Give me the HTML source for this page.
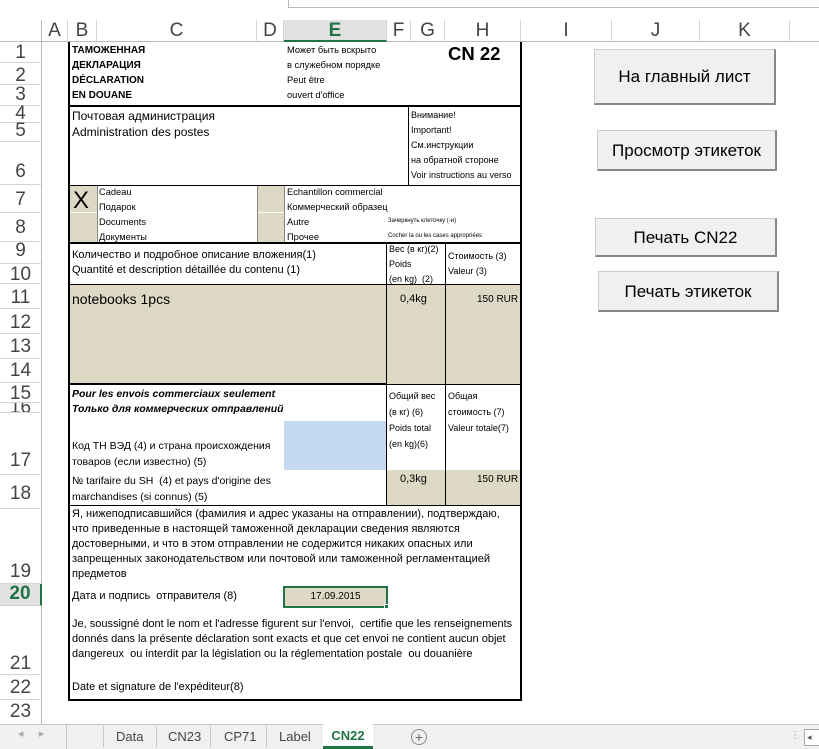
<!DOCTYPE html>
<html><head><meta charset="utf-8"><style>
body{margin:0;width:819px;height:749px;overflow:hidden;background:#fff;position:relative;font-family:"Liberation Sans",Tahoma,sans-serif;}
div{position:absolute;box-sizing:border-box;}
.ch{top:20px;height:22px;font-size:19px;color:#444;text-align:center;line-height:22px;border-right:1px solid #d4d4d4;border-bottom:1px solid #bbb;background:#fff;}
.rh{left:0;width:42px;font-size:19px;color:#444;text-align:center;border-bottom:1px solid #d4d4d4;border-right:1px solid #bbb;}
.t{font-size:10px;color:#000;white-space:nowrap;line-height:15px;}
.s{font-size:12px;color:#000;white-space:nowrap;}
.g{background:#ddd9c4;}
.btn{background:#f0f0f0;border:1px solid #ccc;border-right:2px solid #888;border-bottom:2px solid #888;font-size:17px;text-align:center;color:#000;}
</style></head><body>
<div style="left:288px;top:-1px;width:540px;height:9px;border:1px solid #bbb;"></div>
<div style="left:0;top:20px;width:42px;height:22px;border-bottom:1px solid #bbb;border-right:1px solid #bbb;"></div>
<div class="ch" style="left:42px;width:26px">A</div>
<div class="ch" style="left:68px;width:29px">B</div>
<div class="ch" style="left:97px;width:160px">C</div>
<div class="ch" style="left:257px;width:27px">D</div>
<div class="ch" style="left:284px;width:103px;background:#e1e1e1;color:#217346;font-weight:bold;border-bottom:2px solid #217346">E</div>
<div class="ch" style="left:387px;width:24px">F</div>
<div class="ch" style="left:411px;width:34px">G</div>
<div class="ch" style="left:445px;width:76px">H</div>
<div class="ch" style="left:521px;width:91px">I</div>
<div class="ch" style="left:612px;width:88px">J</div>
<div class="ch" style="left:700px;width:90px">K</div>
<div class="ch" style="left:790px;width:40px"></div>

<div class="rh" style="top:42px;height:21px;line-height:22px">1</div>
<div class="rh" style="top:63px;height:22px;line-height:26px">2</div>
<div class="rh" style="top:85px;height:21px;line-height:20px">3</div>
<div class="rh" style="top:106px;height:17px;line-height:16px">4</div>
<div class="rh" style="top:123px;height:19px;line-height:16px">5</div>
<div class="rh" style="top:142px;height:43px;line-height:60px">6</div>
<div class="rh" style="top:185px;height:28px;line-height:30px">7</div>
<div class="rh" style="top:213px;height:29px;line-height:30px">8</div>
<div class="rh" style="top:242px;height:22px;line-height:18px">9</div>
<div class="rh" style="top:264px;height:20px;line-height:22px">10</div>
<div class="rh" style="top:284px;height:25px;line-height:28px">11</div>
<div class="rh" style="top:309px;height:25px;line-height:28px">12</div>
<div class="rh" style="top:334px;height:25px;line-height:26px">13</div>
<div class="rh" style="top:359px;height:24px;line-height:24px">14</div>
<div class="rh" style="top:383px;height:20px;line-height:22px">15</div>
<div class="rh" style="top:403px;height:10px;line-height:10px;overflow:hidden">16</div>
<div class="rh" style="top:413px;height:62px;line-height:96px">17</div>
<div class="rh" style="top:475px;height:34px;line-height:38px">18</div>
<div class="rh" style="top:509px;height:75px;line-height:126px">19</div>
<div class="rh" style="top:584px;height:22px;line-height:20px;background:#e1e1e1;color:#217346;font-weight:bold;border-right:2px solid #217346">20</div>
<div class="rh" style="top:606px;height:69px;line-height:116px">21</div>
<div class="rh" style="top:675px;height:25px;line-height:26px">22</div>
<div class="rh" style="top:700px;height:24px;line-height:24px;border-bottom:none">23</div>

<!-- fills -->
<div class="g" style="left:68px;top:185px;width:29px;height:57px"></div>
<div class="g" style="left:257px;top:185px;width:27px;height:57px"></div>
<div style="left:68px;top:212px;width:216px;height:1px;background:#fff"></div>
<div style="left:97px;top:185px;width:1px;height:57px;background:#888"></div>
<div style="left:257px;top:185px;width:1px;height:57px;background:#888"></div>
<div style="left:284px;top:185px;width:1px;height:57px;background:#888"></div>
<div class="g" style="left:68px;top:284px;width:453px;height:100px"></div>
<div style="left:284px;top:421px;width:102px;height:49px;background:#c5d9f1"></div>
<div class="g" style="left:386px;top:470px;width:135px;height:35px"></div>

<!-- borders -->
<div style="left:68px;top:42px;width:454px;height:659px;border-left:2px solid #000;border-right:2px solid #000;border-bottom:2px solid #000"></div>
<div style="left:68px;top:105px;width:454px;height:2px;background:#000"></div>
<div style="left:408px;top:106px;width:1px;height:79px;background:#000"></div>
<div style="left:68px;top:185px;width:454px;height:1px;background:#000"></div>
<div style="left:68px;top:242px;width:454px;height:2px;background:#000"></div>
<div style="left:68px;top:284px;width:454px;height:1px;background:#000"></div>
<div style="left:386px;top:242px;width:1px;height:263px;background:#000"></div>
<div style="left:445px;top:242px;width:1px;height:263px;background:#000"></div>
<div style="left:68px;top:383px;width:318px;height:2px;background:#000"></div>
<div style="left:386px;top:384px;width:136px;height:1px;background:#000"></div>
<div style="left:68px;top:505px;width:454px;height:1px;background:#000"></div>

<!-- text -->
<div class="t" style="left:72px;top:43px;font-weight:bold;line-height:15px">ТАМОЖЕННАЯ<br>ДЕКЛАРАЦИЯ<br>DÉCLARATION<br>EN DOUANE</div>
<div class="t" style="left:287px;top:43px;font-size:9.3px;line-height:15px">Может быть вскрыто<br>в служебном порядке<br>Peut être<br>ouvert d'office</div>
<div style="left:448px;top:43px;font-size:18.5px;font-weight:bold">CN 22</div>
<div class="s" style="left:72px;top:108px;line-height:16px">Почтовая администрация<br>Administration des postes</div>
<div class="t" style="left:411px;top:108px;font-size:9px;line-height:15px">Внимание!<br>Important!<br>См.инструкции<br>на обратной стороне<br>Voir instructions au verso</div>
<div style="left:73px;top:184px;font-size:24px;line-height:34px">X</div>
<div class="t" style="left:99px;top:185px;font-size:9.3px;line-height:15px">Cadeau<br>Подарок<br>Documents<br>Документы</div>
<div class="t" style="left:287px;top:185px;font-size:9.3px;line-height:15px">Echantillon commercial<br>Коммерческий образец<br>Autre<br>Прочее</div>
<div class="t" style="left:388px;top:214px;font-size:6px;line-height:15px">Зачеркнуть клеточку (-и)<br>Cocher la ou les cases appropriées</div>
<div class="t" style="left:72px;top:248px;font-size:11px;line-height:15px">Количество и подробное описание вложения(1)<br>Quantité et description détaillée du contenu (1)</div>
<div class="t" style="left:389px;top:242px;font-size:9px;line-height:15px">Вес (в кг)(2)<br>Poids<br>(en kg)&nbsp; (2)</div>
<div class="t" style="left:448px;top:249px;font-size:9px;line-height:15px">Стоимость (3)<br>Valeur (3)</div>
<div class="s" style="left:72px;top:291px;font-size:14px">notebooks 1pcs</div>
<div class="t" style="left:400px;top:292px;font-size:11px">0,4kg</div>
<div class="t" style="left:477px;top:292px;font-size:10px">150 RUR</div>
<div class="t" style="left:72px;top:387px;font-size:10.5px;font-weight:bold;font-style:italic;line-height:15px">Pour les envois commerciaux seulement<br>Только для коммерческих отправлений</div>
<div class="t" style="left:389px;top:388px;font-size:9px;line-height:16px">Общий вес<br>(в кг) (6)<br>Poids total<br>(en kg)(6)</div>
<div class="t" style="left:448px;top:388px;font-size:9px;line-height:16px">Общая<br>стоимость (7)<br>Valeur totale(7)</div>
<div class="t" style="left:72px;top:438px;font-size:10.5px;line-height:16px">Код ТН ВЭД (4) и страна происхождения<br>товаров (если известно) (5)</div>
<div class="t" style="left:72px;top:473px;font-size:10.5px;line-height:16px">№ tarifaire du SH&nbsp; (4) et pays d'origine des<br>marchandises (si connus) (5)</div>
<div class="t" style="left:400px;top:472px;font-size:11px">0,3kg</div>
<div class="t" style="left:477px;top:472px;font-size:10px">150 RUR</div>
<div class="t" style="left:72px;top:507px;font-size:11px;line-height:15px">Я, нижеподписавшийся (фамилия и адрес указаны на отправлении), подтверждаю,<br>что приведенные в настоящей таможенной декларации сведения являются<br>достоверными, и что в этом отправлении не содержится никаких опасных или<br>запрещенных законодательством или почтовой или таможенной регламентацией<br>предметов</div>
<div class="t" style="left:72px;top:589px;font-size:11px">Дата и подпись&nbsp; отправителя (8)</div>
<div class="g" style="left:283px;top:586px;width:105px;height:22px;border:2px solid #217346;font-size:10px;text-align:center;line-height:18px">17.09.2015</div>
<div style="left:384px;top:604px;width:5px;height:5px;background:#217346;border:1px solid #fff"></div>
<div class="t" style="left:72px;top:617px;font-size:11px;line-height:15px">Je, soussigné dont le nom et l'adresse figurent sur l'envoi,&nbsp; certifie que les renseignements<br>donnés dans la présente déclaration sont exacts et que cet envoi ne contient aucun objet<br>dangereux&nbsp; ou interdit par la législation ou la réglementation postale&nbsp; ou douanière</div>
<div class="t" style="left:72px;top:680px;font-size:11px">Date et signature de l'expéditeur(8)</div>

<!-- buttons -->
<div class="btn" style="left:594px;top:49px;width:182px;height:56px;line-height:54px">На главный лист</div>
<div class="btn" style="left:597px;top:130px;width:180px;height:41px;line-height:39px">Просмотр этикеток</div>
<div class="btn" style="left:595px;top:218px;width:182px;height:39px;line-height:37px">Печать CN22</div>
<div class="btn" style="left:598px;top:271px;width:181px;height:41px;line-height:39px">Печать этикеток</div>

<!-- tabs -->
<div style="left:0;top:724px;width:819px;height:25px;background:#f0f0f0;border-top:1px solid #c6c6c6"></div>
<div style="left:18px;top:727px;font-size:11px;color:#aaa">◂&nbsp;&nbsp;&nbsp;&nbsp;&nbsp;▸</div>
<div style="left:66px;top:724px;width:1px;height:25px;background:#c6c6c6"></div>
<div style="left:104px;top:726px;width:140px;height:21px;font-size:13px;color:#444;line-height:22px">
<span style="position:absolute;left:12px">Data</span><span style="position:absolute;left:52px;top:0;width:1px;height:21px;background:#c6c6c6"></span>
<span style="position:absolute;left:64px">CN23</span><span style="position:absolute;left:106px;top:0;width:1px;height:21px;background:#c6c6c6"></span>
<span style="position:absolute;left:120px">CP71</span></div>
<div style="left:103px;top:726px;width:1px;height:21px;background:#c6c6c6"></div>
<div style="left:266px;top:726px;width:1px;height:21px;background:#c6c6c6"></div>
<div style="left:279px;top:726px;font-size:13px;color:#444;line-height:22px">Label</div>
<div style="left:323px;top:724px;width:50px;height:25px;background:#fff;border-bottom:3px solid #217346;font-size:13px;font-weight:bold;color:#217346;text-align:center;line-height:24px">CN22</div>
<div style="left:411px;top:729px;width:16px;height:16px;border:1px solid #888;border-radius:50%;font-size:14px;color:#666;text-align:center;line-height:14px">+</div>
<div style="left:790px;top:730px;font-size:10px;color:#999">⋮</div>
<div style="left:804px;top:729px;width:16px;height:17px;border:1px solid #aaa;background:#fff;font-size:9px;color:#555;line-height:15px;padding-left:2px">◂</div>
</body></html>
